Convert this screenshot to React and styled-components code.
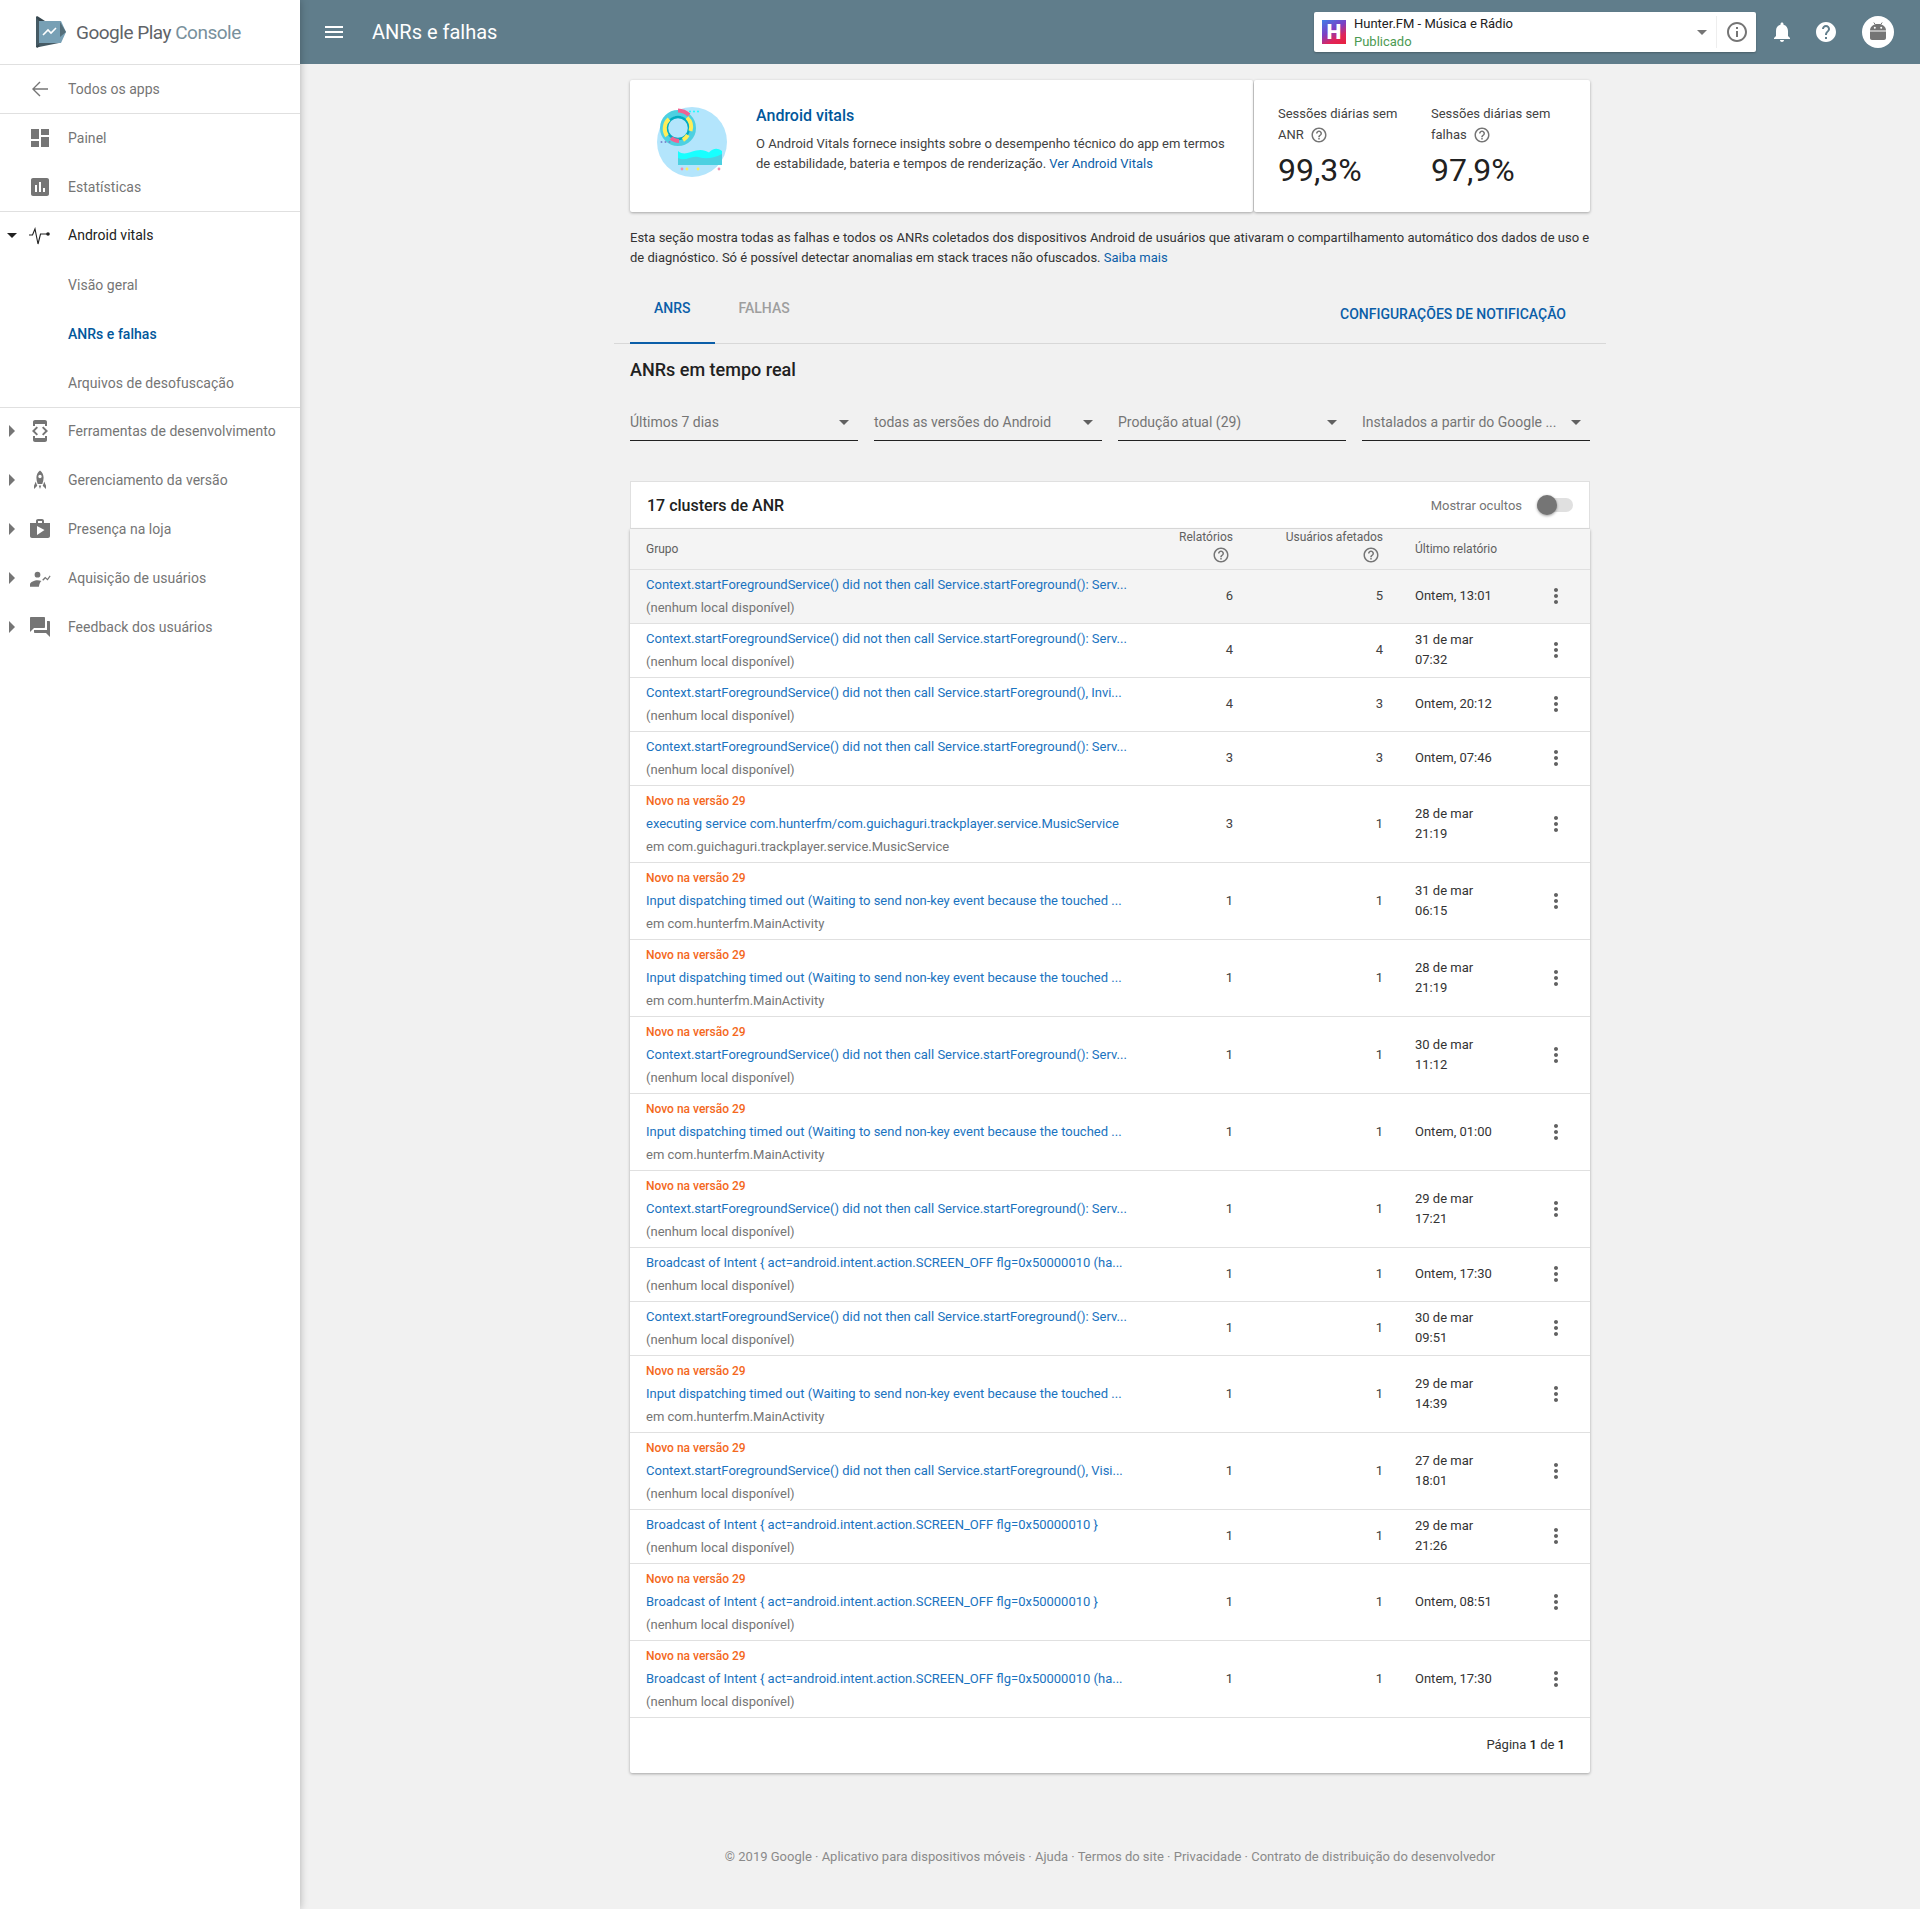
import React from 'react'
import styled, { createGlobalStyle } from 'styled-components'

const GlobalStyle = createGlobalStyle`
  html, body {
    margin: 0;
    padding: 0;
    background: #f1f1f1;
    font-family: Roboto, "Liberation Sans", sans-serif;
    font-size: 14px;
    color: #212121;
  }
  * {
    box-sizing: border-box;
  }
`

const Page = styled.div`
  display: flex;
  min-height: 1909px;
`

const Sidebar = styled.nav`
  width: 300px;
  flex: none;
  background: #fff;
  box-shadow: 0 0 8px rgba(0, 0, 0, 0.28);
  position: relative;
  z-index: 2;
`

const LogoBar = styled.div`
  height: 65px;
  display: flex;
  align-items: center;
  padding-left: 36px;
  border-bottom: 1px solid #e0e0e0;
`

const LogoText = styled.span`
  margin-left: 10px;
  font-size: 19px;
  letter-spacing: -0.5px;
  color: #5f6368;
  & span {
    color: #78909c;
  }
`

const NavSection = styled.div`
  display: flex;
  flex-direction: column;
  gap: 1px;
  border-bottom: ${p => (p.$last ? 'none' : '1px solid #e0e0e0')};
`

const NavRow = styled.a`
  height: 48px;
  display: flex;
  align-items: center;
  padding-bottom: ${p => (p.$lift ? '2px' : '0')};
  color: ${p => (p.$active ? '#01579b' : p.$dark ? '#212121' : '#757575')};
  font-weight: ${p => (p.$active ? 500 : 400)};
  font-size: 14px;
  letter-spacing: 0.03px;
`

const CaretSlot = styled.span`
  width: 28px;
  flex: none;
  display: flex;
  padding-left: ${p => (p.$open ? '7px' : '9px')};
`

const CaretRight = styled.i`
  border-left: 6px solid #757575;
  border-top: 6px solid transparent;
  border-bottom: 6px solid transparent;
`

const CaretDown = styled.i`
  display: block;
  flex: none;
  border-top: 5px solid ${p => p.$color || '#212121'};
  border-left: 5px solid transparent;
  border-right: 5px solid transparent;
`

const NavIcon = styled.svg`
  width: 24px;
  height: 24px;
  flex: none;
  fill: ${p => p.$color || '#757575'};
  margin-right: 16px;
`

const VitalsSvg = styled.svg`
  width: 24px;
  height: 24px;
  flex: none;
  margin-right: 16px;
`

const Column = styled.div`
  flex: 1;
  min-width: 0;
  display: flex;
  flex-direction: column;
`

const TopBar = styled.header`
  height: 64px;
  background: #607d8b;
  display: flex;
  align-items: center;
  padding: 0 26px 0 22px;
  color: #fff;
`

const TopTitle = styled.h1`
  margin: 0 0 0 26px;
  font-size: 20px;
  font-weight: 400;
`

const WhiteIcon = styled.svg`
  width: 24px;
  height: 24px;
  flex: none;
  fill: #fff;
  margin-left: ${p => p.$gap || 0}px;
`

const AppPicker = styled.div`
  margin-left: auto;
  width: 442px;
  height: 40px;
  background: #fff;
  border-radius: 2px;
  box-shadow: 0 1px 2px rgba(0, 0, 0, 0.25);
  display: flex;
  align-items: center;
  padding-left: 8px;
`

const AppBadge = styled.span`
  width: 24px;
  height: 24px;
  flex: none;
  display: flex;
  align-items: center;
  justify-content: center;
  background: linear-gradient(150deg, #3f7fe8 0%, #7b3fc4 42%, #e0245a 72%, #e8203c 100%);
  color: #fff;
  font-weight: 900;
  font-size: 21px;
  line-height: 24px;
`

const AppInfo = styled.div`
  flex: 1;
  margin-left: 8px;
  padding-top: 2px;
  font-size: 13px;
  line-height: 18px;
  color: #212121;
`

const AppState = styled.div`
  color: #4c9a52;
`

const PickerDivider = styled.span`
  width: 1px;
  height: 32px;
  background: #eeeeee;
  margin: 0 8px 0 9px;
`

const InfoIcon = styled.svg`
  width: 24px;
  height: 24px;
  flex: none;
  fill: #757575;
  margin-right: 7px;
`

const Avatar = styled.span`
  width: 32px;
  height: 32px;
  border-radius: 50%;
  background: #fff;
  margin-left: 24px;
  display: flex;
  align-items: center;
  justify-content: center;
`

const Main = styled.main`
  width: 960px;
  margin: 0 auto;
  padding-top: 16px;
`

const Hero = styled.section`
  display: flex;
  height: 132px;
  gap: 1px;
`

const HeroPanel = styled.div`
  background: #fff;
  border-radius: 2px;
  box-shadow: 0 1px 3px rgba(0, 0, 0, 0.32);
  display: flex;
  width: ${p => p.$width}px;
  padding: ${p => p.$pad};
`

const HeroArt = styled.svg`
  width: 70px;
  height: 70px;
  flex: none;
  margin-right: 29px;
`

const HeroTitle = styled.h2`
  margin: -1px 0 8px;
  font-size: 16px;
  line-height: 20px;
  font-weight: 500;
  color: #01579b;
`

const HeroBody = styled.p`
  margin: 0;
  width: 480px;
  font-size: 13px;
  line-height: 20px;
  color: #424242;
`

const Anchor = styled.a`
  color: #0b5ea8;
`

const Stat = styled.div`
  width: 153px;
`

const StatLabel = styled.div`
  font-size: 13px;
  line-height: 21px;
  color: #424242;
  width: 130px;
`

const StatValue = styled.div`
  margin-top: 5px;
  font-size: 32px;
  line-height: 40px;
  color: #212121;
`

const HelpIcon = styled.svg`
  width: 18px;
  height: 18px;
  fill: #757575;
  vertical-align: ${p => (p.$inline ? '-5px' : 'top')};
  margin-left: ${p => (p.$inline ? '3px' : '0')};
  margin-right: ${p => (p.$inline ? '0' : '3px')};
  display: ${p => (p.$inline ? 'inline-block' : 'block')};
`

const Intro = styled.p`
  margin: 16px 0 0;
  font-size: 13px;
  line-height: 20px;
  color: #333;
`

const TabBar = styled.div`
  margin: 0 -16px;
  padding: 0 16px;
  height: 76px;
  display: flex;
  border-bottom: 1px solid #d8d8d8;
`

const Tab = styled.div`
  height: 76px;
  padding: 30px 24px 0;
  line-height: 20px;
  font-size: 14px;
  font-weight: 500;
  color: ${p => (p.$active ? '#0b5ea8' : '#9e9e9e')};
  border-bottom: 2px solid ${p => (p.$active ? '#0b5ea8' : 'transparent')};
`

const NotifyLink = styled.a`
  margin-left: auto;
  margin-right: 24px;
  margin-top: 36px;
  line-height: 20px;
  font-size: 14px;
  font-weight: 500;
  color: #0b5ea8;
`

const SectionTitle = styled.h3`
  margin: 13px 0 0;
  font-size: 18px;
  line-height: 26px;
  font-weight: 500;
  color: #212121;
`

const Filters = styled.div`
  margin-top: 21px;
  display: grid;
  grid-template-columns: repeat(4, 228px);
  gap: 16px;
`

const Filter = styled.div`
  height: 37px;
  display: flex;
  align-items: center;
  justify-content: space-between;
  padding: 0 9px 0 0;
  font-size: 14px;
  color: #757575;
  border-bottom: 1px solid #212121;
`

const ClusterHead = styled.div`
  margin-top: 40px;
  height: 48px;
  padding: 0 16px;
  background: #fff;
  border: 1px solid #e0e0e0;
  display: flex;
  align-items: center;
  justify-content: space-between;
`

const ClusterTitle = styled.h4`
  margin: 0;
  font-size: 16px;
  font-weight: 500;
  color: #212121;
`

const ToggleWrap = styled.div`
  display: flex;
  align-items: center;
  font-size: 13px;
  color: #757575;
`

const Toggle = styled.span`
  position: relative;
  display: block;
  width: 36px;
  height: 14px;
  margin-left: 15px;
  border-radius: 7px;
  background: #e0e0e0;
  &::after {
    content: '';
    position: absolute;
    left: 0;
    top: -3px;
    width: 20px;
    height: 20px;
    border-radius: 50%;
    background: #757575;
    box-shadow: 0 1px 3px rgba(0, 0, 0, 0.4);
  }
`

const TableCard = styled.div`
  background: #fff;
  border-radius: 0 0 2px 2px;
  box-shadow: 0 1px 3px rgba(0, 0, 0, 0.32);
`

const cols = '495px 108px 150px 152px 55px'

const HeadRow = styled.div`
  display: grid;
  grid-template-columns: ${cols};
  height: 41px;
  padding-left: 0;
  background: #f4f4f4;
  border-bottom: 1px solid #e0e0e0;
  font-size: 12px;
  line-height: 16px;
  color: #616161;
`

const HeadCell = styled.div`
  display: flex;
  flex-direction: column;
  gap: 1px;
  align-items: ${p => (p.$right ? 'flex-end' : 'flex-start')};
  justify-content: ${p => (p.$right ? 'flex-start' : 'center')};
  padding-left: ${p => p.$left || 0}px;
`

const Row = styled.div`
  display: grid;
  grid-template-columns: ${cols};
  align-items: center;
  padding: 3px 0 4px;
  background: ${p => (p.$hover ? '#f4f4f4' : '#fff')};
  border-bottom: 1px solid #e0e0e0;
`

const GroupCell = styled.div`
  padding-left: 16px;
  font-size: 13px;
  line-height: 23px;
`

const NewTag = styled.div`
  padding-top: 1px;
  margin-bottom: -1px;
  font-size: 12px;
  font-weight: 500;
  color: #f4681c;
`

const Issue = styled.a`
  display: block;
  white-space: nowrap;
  color: #1a73c0;
`

const Where = styled.div`
  color: #757575;
  white-space: nowrap;
`

const Num = styled.div`
  padding-bottom: 1px;
  text-align: right;
  font-size: 13px;
  color: #424242;
`

const DateCell = styled.div`
  padding-left: 32px;
  font-size: 13px;
  line-height: 20px;
  color: #333;
`

const Dots = styled.svg`
  width: 24px;
  height: 24px;
  fill: #616161;
  display: block;
  margin-left: 9px;
`

const Pager = styled.div`
  height: 55px;
  padding: 0 25px 2px 0;
  display: flex;
  align-items: center;
  justify-content: flex-end;
  font-size: 13px;
  color: #333;
  white-space: pre;
  & b {
    font-weight: 500;
    color: #212121;
  }
`

const Footer = styled.footer`
  margin-top: 74px;
  line-height: 20px;
  font-size: 13px;
  color: #8a8a8a;
  text-align: center;
`

const Ico = ({ d, as: C = NavIcon, ...rest }) => (
  <C viewBox="0 0 24 24" {...rest}>
    <path d={d} />
  </C>
)

const icons = {
  back: 'M20 11.3H6.6l5.9-5.9-1-1L4 12l7.5 7.5 1-1-5.9-5.8H20z',
  dashboard: 'M3 13h8V3H3v10zm0 8h8v-6H3v6zm10 0h8V11h-8v10zm0-18v6h8V3h-8z',
  stats: 'M19 3H5c-1.1 0-2 .9-2 2v14c0 1.1.9 2 2 2h14c1.1 0 2-.9 2-2V5c0-1.1-.9-2-2-2zM9 17H7v-7h2v7zm4 0h-2V7h2v10zm4 0h-2v-4h2v4z',
  tools: 'M7 1h10c1.1 0 2 .9 2 2v4h-2V5H7v2H5V3c0-1.1.9-2 2-2zm8.4 15.6L20 12l-4.6-4.6L14 8.8l3.2 3.2-3.2 3.2 1.4 1.4zM10 15.2L6.8 12 10 8.8 8.6 7.4 4 12l4.6 4.6 1.4-1.4zM5 17h2v2h10v-2h2v4c0 1.1-.9 2-2 2H7c-1.1 0-2-.9-2-2z',
  rocket: 'M12 2.500c-2.500 1.900-3.600 4.500-3.600 7.300 0 2 .5 4.100 1.300 6.200h4.600c.8-2.100 1.300-4.200 1.300-6.200 0-2.800-1.100-5.400-3.600-7.300zm0 7.700a1.700 1.700 0 1 1 0-3.400 1.700 1.700 0 0 1 0 3.400zM7.800 13.500L6 17.800V21l3.300-3.200c-.6-1.400-1.200-2.900-1.500-4.300zm8.400 0c-.3 1.400-.9 2.900-1.500 4.300L18 21v-3.200zM10.800 17.500h2.400L12 21z',
  store: 'M16 6V4c0-1.11-.89-2-2-2h-4c-1.11 0-2 .89-2 2v2H2v13c0 1.11.89 2 2 2h16c1.11 0 2-.89 2-2V6h-6zm-6-2h4v2h-4V4zM9 18V9l7.5 4L9 18z',
  users: 'M9.500 5.800a2.900 2.900 0 1 1 0 5.800 2.900 2.900 0 0 1 0-5.800zM2 20.800v-2.500c0-2.300 4.700-4 7.500-4 1.200 0 2.800.2 4 .7-1.300.8-2.200 3-2.600 5.800H2zM14.200 13.800l3-3 2.200 2 2.300-3.200.9.7-3 4.100-2.200-2-2.200 2.400z',
  feedback: 'M21 6h-2v9H6v2c0 .55.45 1 1 1h11l4 4V7c0-.55-.45-1-1-1zm-4 6V3c0-.55-.45-1-1-1H3c-.55 0-1 .45-1 1v14l4-4h10c.55 0 1-.45 1-1z',
  menu: 'M3 18h18v-2H3v2zm0-5h18v-2H3v2zm0-7v2h18V6H3z',
  info: 'M11 7h2v2h-2zm0 4h2v6h-2zm1-9C6.48 2 2 6.48 2 12s4.48 10 10 10 10-4.48 10-10S17.52 2 12 2zm0 18c-4.41 0-8-3.59-8-8s3.59-8 8-8 8 3.59 8 8-3.59 8-8 8z',
  bell: 'M12 22c1.1 0 2-.9 2-2h-4c0 1.1.89 2 2 2zm6-6v-5c0-3.07-1.64-5.64-4.5-6.32V4c0-.83-.67-1.5-1.5-1.5s-1.5.67-1.5 1.5v.68C7.63 5.36 6 7.92 6 11v5l-2 2v1h16v-1l-2-2z',
  helpFill: 'M12 2C6.48 2 2 6.48 2 12s4.48 10 10 10 10-4.48 10-10S17.52 2 12 2zm1 17h-2v-2h2v2zm2.07-7.75l-.9.92C13.45 12.9 13 13.5 13 15h-2v-.5c0-1.1.45-2.1 1.17-2.83l1.24-1.26c.37-.36.59-.86.59-1.41 0-1.1-.9-2-2-2s-2 .9-2 2H8c0-2.21 1.79-4 4-4s4 1.79 4 4c0 .88-.36 1.68-.93 2.25z',
  help: 'M11 18h2v-2h-2v2zm1-16C6.48 2 2 6.48 2 12s4.48 10 10 10 10-4.48 10-10S17.52 2 12 2zm0 18c-4.41 0-8-3.59-8-8s3.59-8 8-8 8 3.59 8 8-3.59 8-8 8zm0-14c-2.21 0-4 1.79-4 4h2c0-1.1.9-2 2-2s2 .9 2 2c0 2-3 1.75-3 5h2c0-2.25 3-2.5 3-5 0-2.21-1.79-4-4-4z',
  dots: 'M12 8c1.1 0 2-.9 2-2s-.9-2-2-2-2 .9-2 2 .9 2 2 2zm0 2c-1.1 0-2 .9-2 2s.9 2 2 2 2-.9 2-2-.9-2-2-2zm0 6c-1.1 0-2 .9-2 2s.9 2 2 2 2-.9 2-2-.9-2-2-2z'
}

const PlayLogo = () => (
  <svg width="30" height="32" viewBox="0 0 30 32">
    <path d="M0 1.500C0 .4 1 0 2 .6L9 5H0z" fill="#37474f" />
    <path d="M0 27h9l-7 4.400c-1 .6-2 .2-2-.9z" fill="#37474f" />
    <path d="M0 5h25l5 11-5 11H0z" fill="#78a0b5" />
    <path d="M0 1.500v29L3 28V5z" fill="#455a64" />
    <path d="M3 27h20L3 31z" fill="#455a64" />
    <path d="M24 6l6 10-6 5z" fill="#546e7a" />
    <path d="M7 19l5-5 3 3 5-5" stroke="#fff" strokeWidth="1.6" fill="none" />
  </svg>
)

const VitalsIcon = () => (
  <VitalsSvg viewBox="0 0 24 24">
    <path d="M1 12h3.500L7 6l3 15 2.500-10H20" stroke="#212121" strokeWidth="1.1" fill="none" />
    <circle cx="20" cy="11" r="1.800" fill="#212121" />
  </VitalsSvg>
)

const HeroIllustration = () => (
  <HeroArt viewBox="0 0 70 70">
    <circle cx="35" cy="35" r="35" fill="#b3e5fc" />
    <circle cx="21" cy="21" r="15" fill="none" stroke="#4dd0e1" strokeWidth="6" />
    <circle cx="21" cy="21" r="11" fill="none" stroke="#00acc1" strokeWidth="2.400" />
    <path d="M30.800 28A13 13 0 0 1 26 33" stroke="#ffee58" strokeWidth="4" fill="none" />
    <path d="M12 12A13 13 0 0 0 10 29" stroke="#ffee58" strokeWidth="4" fill="none" />
    <path d="M30 10.600A13 13 0 0 1 33.500 24" stroke="#ffee58" strokeWidth="4" fill="none" />
    <path d="M21 3.500A17 17 0 0 1 32 8" stroke="#f06292" strokeWidth="4" fill="none" />
    <path d="M14 31a13 13 0 0 0 8 3" stroke="#f06292" strokeWidth="4" fill="none" />
    <path d="M21 44c6 5 12 1 18-.5s9 0 13 2c4-4 8-5 13-1.500V57H21z" fill="#18ffff" />
    <path d="M21 51c8 4 13-3 20-1s14 2 24-3v11H21z" fill="#4dd0e1" />
    {[4, 8, 12].map(x => <circle key={x} cx={x + 0.5} cy="35" r="1" fill="#7986cb" />)}
    {[33, 37, 41].map(x => <circle key={x} cx={x} cy="4.500" r="1" fill="#18ffff" />)}
    <circle cx="25" cy="62" r="1.400" fill="#f48fb1" />
    <circle cx="30" cy="62" r="1.400" fill="#ffee58" />
    <circle cx="41" cy="62" r="1.400" fill="#ffee58" />
    <circle cx="62" cy="62" r="1.400" fill="#f48fb1" />
  </HeroArt>
)

const AndroidHead = () => (
  <svg width="24" height="24" viewBox="0 0 24 24" fill="#757575">
    <path d="M4 10.500C4 6.600 7.600 4 12 4s8 2.600 8 6.500z" />
    <path d="M4 11.500h16V18c0 1.100-.9 2-2 2H6c-1.100 0-2-.9-2-2z" />
    <path d="M7.800 2.500l1.700 2.400M16.200 2.500l-1.700 2.400" stroke="#757575" strokeWidth="1" />
    <circle cx="8.800" cy="7.800" r="1" fill="#fff" />
    <circle cx="15.200" cy="7.800" r="1" fill="#fff" />
  </svg>
)

const serv = 'Context.startForegroundService() did not then call Service.startForeground(): Serv...'
const invi = 'Context.startForegroundService() did not then call Service.startForeground(), Invi...'
const visi = 'Context.startForegroundService() did not then call Service.startForeground(), Visi...'
const input = 'Input dispatching timed out (Waiting to send non-key event because the touched ...'
const bcastLong = 'Broadcast of Intent { act=android.intent.action.SCREEN_OFF flg=0x50000010 (ha...'
const bcast = 'Broadcast of Intent { act=android.intent.action.SCREEN_OFF flg=0x50000010 }'
const music = 'executing service com.hunterfm/com.guichaguri.trackplayer.service.MusicService'
const none = '(nenhum local disponível)'
const mainAct = 'em com.hunterfm.MainActivity'
const musicAct = 'em com.guichaguri.trackplayer.service.MusicService'

const rows = [
  { issue: serv, where: none, reports: 6, users: 5, date: ['Ontem, 13:01'], hover: true },
  { issue: serv, where: none, reports: 4, users: 4, date: ['31 de mar', '07:32'] },
  { issue: invi, where: none, reports: 4, users: 3, date: ['Ontem, 20:12'] },
  { issue: serv, where: none, reports: 3, users: 3, date: ['Ontem, 07:46'] },
  { fresh: true, issue: music, where: musicAct, reports: 3, users: 1, date: ['28 de mar', '21:19'] },
  { fresh: true, issue: input, where: mainAct, reports: 1, users: 1, date: ['31 de mar', '06:15'] },
  { fresh: true, issue: input, where: mainAct, reports: 1, users: 1, date: ['28 de mar', '21:19'] },
  { fresh: true, issue: serv, where: none, reports: 1, users: 1, date: ['30 de mar', '11:12'] },
  { fresh: true, issue: input, where: mainAct, reports: 1, users: 1, date: ['Ontem, 01:00'] },
  { fresh: true, issue: serv, where: none, reports: 1, users: 1, date: ['29 de mar', '17:21'] },
  { issue: bcastLong, where: none, reports: 1, users: 1, date: ['Ontem, 17:30'] },
  { issue: serv, where: none, reports: 1, users: 1, date: ['30 de mar', '09:51'] },
  { fresh: true, issue: input, where: mainAct, reports: 1, users: 1, date: ['29 de mar', '14:39'] },
  { fresh: true, issue: visi, where: none, reports: 1, users: 1, date: ['27 de mar', '18:01'] },
  { issue: bcast, where: none, reports: 1, users: 1, date: ['29 de mar', '21:26'] },
  { fresh: true, issue: bcast, where: none, reports: 1, users: 1, date: ['Ontem, 08:51'] },
  { fresh: true, issue: bcastLong, where: none, reports: 1, users: 1, date: ['Ontem, 17:30'] }
]

const tools = [
  ['tools', 'Ferramentas de desenvolvimento'],
  ['rocket', 'Gerenciamento da versão'],
  ['store', 'Presença na loja'],
  ['users', 'Aquisição de usuários'],
  ['feedback', 'Feedback dos usuários']
]

const filters = ['Últimos 7 dias', 'todas as versões do Android', 'Produção atual (29)', 'Instalados a partir do Google ...']

const Nav = () => (
  <Sidebar>
    <LogoBar>
      <PlayLogo />
      <LogoText>Google Play <span>Console</span></LogoText>
    </LogoBar>
    <NavSection>
      <NavRow><CaretSlot /><Ico d={icons.back} />Todos os apps</NavRow>
    </NavSection>
    <NavSection>
      <NavRow><CaretSlot /><Ico d={icons.dashboard} />Painel</NavRow>
      <NavRow><CaretSlot /><Ico d={icons.stats} />Estatísticas</NavRow>
    </NavSection>
    <NavSection>
      <NavRow $dark $lift><CaretSlot $open><CaretDown /></CaretSlot><VitalsIcon />Android vitals</NavRow>
      <NavRow><CaretSlot /><NavIcon as="span" />Visão geral</NavRow>
      <NavRow $active><CaretSlot /><NavIcon as="span" />ANRs e falhas</NavRow>
      <NavRow><CaretSlot /><NavIcon as="span" />Arquivos de desofuscação</NavRow>
    </NavSection>
    <NavSection $last>
      {tools.map(([icon, label]) => (
        <NavRow key={label} $lift>
          <CaretSlot><CaretRight /></CaretSlot>
          <Ico d={icons[icon]} />
          {label}
        </NavRow>
      ))}
    </NavSection>
  </Sidebar>
)

const Top = () => (
  <TopBar>
    <Ico as={WhiteIcon} d={icons.menu} />
    <TopTitle>ANRs e falhas</TopTitle>
    <AppPicker>
      <AppBadge>H</AppBadge>
      <AppInfo>
        <div>Hunter.FM - Música e Rádio</div>
        <AppState>Publicado</AppState>
      </AppInfo>
      <CaretDown $color="#757575" />
      <PickerDivider />
      <Ico as={InfoIcon} d={icons.info} />
    </AppPicker>
    <Ico as={WhiteIcon} $gap={14} d={icons.bell} />
    <Ico as={WhiteIcon} $gap={20} d={icons.helpFill} />
    <Avatar><AndroidHead /></Avatar>
  </TopBar>
)

const IssueRow = ({ row }) => (
  <Row $hover={row.hover}>
    <GroupCell>
      {row.fresh && <NewTag>Novo na versão 29</NewTag>}
      <Issue>{row.issue}</Issue>
      <Where>{row.where}</Where>
    </GroupCell>
    <Num>{row.reports}</Num>
    <Num>{row.users}</Num>
    <DateCell>{row.date.map(line => <div key={line}>{line}</div>)}</DateCell>
    <Ico as={Dots} d={icons.dots} />
  </Row>
)

export default function App () {
  return (
    <Page>
      <GlobalStyle />
      <Nav />
      <Column>
        <Top />
        <Main>
          <Hero>
            <HeroPanel $width={623} $pad="27px 0 0 27px">
              <HeroIllustration />
              <div>
                <HeroTitle>Android vitals</HeroTitle>
                <HeroBody>
                  O Android Vitals fornece insights sobre o desempenho técnico do app em termos de estabilidade, bateria e tempos de renderização. <Anchor>Ver Android Vitals</Anchor>
                </HeroBody>
              </div>
            </HeroPanel>
            <HeroPanel $width={336} $pad="23px 0 0 24px">
              <Stat>
                <StatLabel>Sessões diárias sem ANR <Ico as={HelpIcon} $inline d={icons.help} /></StatLabel>
                <StatValue>99,3%</StatValue>
              </Stat>
              <Stat>
                <StatLabel>Sessões diárias sem falhas <Ico as={HelpIcon} $inline d={icons.help} /></StatLabel>
                <StatValue>97,9%</StatValue>
              </Stat>
            </HeroPanel>
          </Hero>
          <Intro>
            Esta seção mostra todas as falhas e todos os ANRs coletados dos dispositivos Android de usuários que ativaram o compartilhamento automático dos dados de uso e de diagnóstico. Só é possível detectar anomalias em stack traces não ofuscados. <Anchor>Saiba mais</Anchor>
          </Intro>
          <TabBar>
            <Tab $active>ANRS</Tab>
            <Tab>FALHAS</Tab>
            <NotifyLink>CONFIGURAÇÕES DE NOTIFICAÇÃO</NotifyLink>
          </TabBar>
          <SectionTitle>ANRs em tempo real</SectionTitle>
          <Filters>
            {filters.map(label => (
              <Filter key={label}>{label}<CaretDown $color="#616161" /></Filter>
            ))}
          </Filters>
          <ClusterHead>
            <ClusterTitle>17 clusters de ANR</ClusterTitle>
            <ToggleWrap>Mostrar ocultos<Toggle /></ToggleWrap>
          </ClusterHead>
          <TableCard>
            <HeadRow>
              <HeadCell $left={16}>Grupo</HeadCell>
              <HeadCell $right>Relatórios<Ico as={HelpIcon} d={icons.help} /></HeadCell>
              <HeadCell $right>Usuários afetados<Ico as={HelpIcon} d={icons.help} /></HeadCell>
              <HeadCell $left={32}>Último relatório</HeadCell>
              <HeadCell />
            </HeadRow>
            {rows.map((row, i) => <IssueRow key={i} row={row} />)}
            <Pager>Página <b>1</b> de <b>1</b></Pager>
          </TableCard>
          <Footer>© 2019 Google · Aplicativo para dispositivos móveis · Ajuda · Termos do site · Privacidade · Contrato de distribuição do desenvolvedor</Footer>
        </Main>
      </Column>
    </Page>
  )
}
